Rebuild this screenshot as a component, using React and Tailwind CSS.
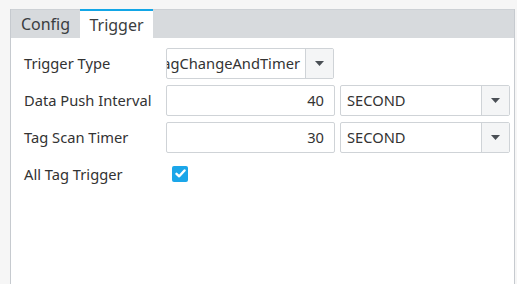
import React from "react";

function Caret() {
  return (
    <svg width="9" height="5" viewBox="0 0 9 5">
      <path d="M0 0 H9 L4.5 5 Z" fill="#4a4f55" />
    </svg>
  );
}

function Select({ value, clipLeft, className }) {
  return (
    <div className={"flex h-[31px] border border-[#cfd3d7] rounded-[2px] bg-white " + className}>
      <div className={"flex-1 min-w-0 overflow-hidden flex items-center " + (clipLeft ? "justify-end pr-[5px]" : "pl-[6px]")}>
        <span className="whitespace-nowrap">{value}</span>
      </div>
      <div className="w-[28px] border-l border-[#cfd3d7] bg-[#f4f5f6] flex items-center justify-center">
        <Caret />
      </div>
    </div>
  );
}

function NumInput({ value }) {
  return (
    <div className="h-[31px] w-[169px] border border-[#cfd3d7] rounded-[2px] bg-white flex items-center justify-end pr-[10px]">
      {value}
    </div>
  );
}

export default function App() {
  return (
    <div
      className="w-[517px] h-[284px] bg-[#f6f6f6] pt-[9px] pl-[10px] pr-[2px] text-[14.7px] text-[#333333] overflow-hidden"
      style={{ fontFamily: '"Noto Sans", "Open Sans", sans-serif' }}
    >
      <div className="h-full flex flex-col border-l border-r border-[#c6cacf] bg-white">
        <div className="h-[29px] bg-[#d7dadd] border-t border-[#cdd1d5] flex text-[16px]">
          <div className="w-[69px] flex items-center justify-center text-[#3a3d40]">Config</div>
          <div className="w-[73px] bg-white border-t-[2px] border-[#12a6e6] -mt-px flex items-center justify-center text-[#3a3d40]">
            Trigger
          </div>
        </div>
        <div className="flex-1 pt-[10px] pl-[13px] pr-[4px] flex flex-col gap-[6px]">
          <div className="flex items-center h-[31px]">
            <div className="w-[142px]">Trigger Type</div>
            <Select value="TagChangeAndTimer" clipLeft className="w-[168px]" />
          </div>
          <div className="flex items-center h-[31px]">
            <div className="w-[142px]">Data Push Interval</div>
            <NumInput value="40" />
            <Select value="SECOND" className="w-[170px] ml-[5px]" />
          </div>
          <div className="flex items-center h-[31px]">
            <div className="w-[142px]">Tag Scan Timer</div>
            <NumInput value="30" />
            <Select value="SECOND" className="w-[170px] ml-[5px]" />
          </div>
          <div className="flex items-center h-[31px]">
            <div className="w-[148px]">All Tag Trigger</div>
            <div className="w-[16px] h-[16px] -mt-[2px] rounded-[2px] bg-[#1ba6e9] flex items-center justify-center">
              <svg width="11" height="9" viewBox="0 0 11 9">
                <path d="M1.5 4.8 L4.2 7.3 L9.5 1.5" stroke="white" strokeWidth="2.4" fill="none" strokeLinecap="round" strokeLinejoin="round" />
              </svg>
            </div>
          </div>
        </div>
      </div>
    </div>
  );
}
